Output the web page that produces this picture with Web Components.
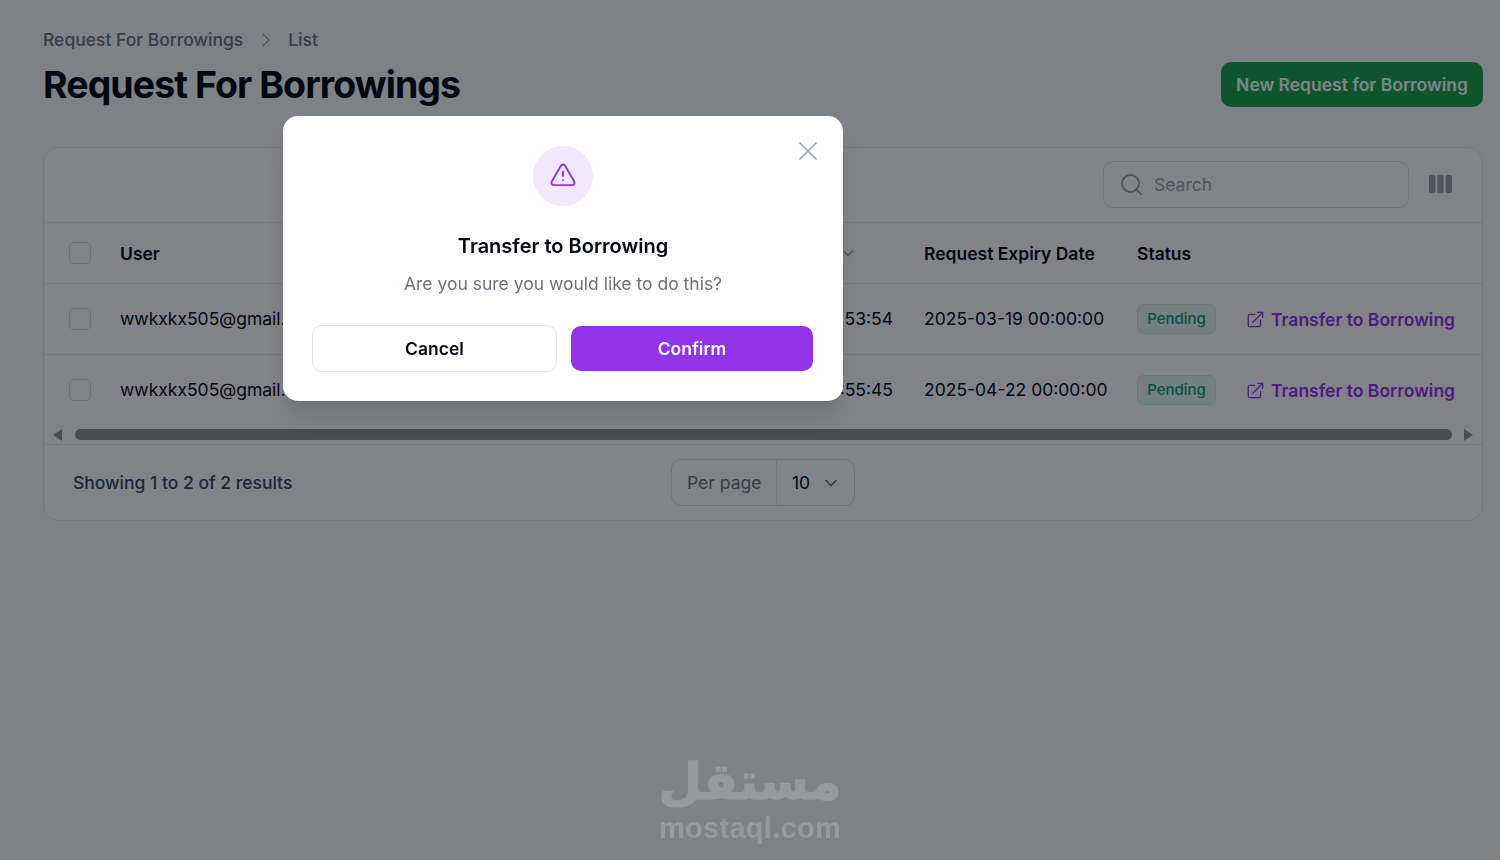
<!DOCTYPE html>
<html lang="en"><head><meta charset="utf-8"><title>Request For Borrowings</title>
<style>
html,body{margin:0;height:100%}
body{background:#f9fafb;font-family:Inter,"Liberation Sans",sans-serif;color:#030712;font-size:17.5px;overflow:hidden}
</style></head><body>
<borrow-page></borrow-page>
<modal-overlay></modal-overlay>
<mostaql-mark></mostaql-mark>
<script>
const def=(name,html,extra)=>{customElements.define(name,class extends HTMLElement{
  constructor(){super();this.attachShadow({mode:'open'}).innerHTML=html;}
  connectedCallback(){extra&&extra(this);}
});};
const ext=`<svg width="20" height="20" viewBox="0 0 20 20" fill="none" stroke="currentColor" stroke-width="1.5" stroke-linecap="round" stroke-linejoin="round"><path d="M9 4H3.200A1.700 1.700 0 0 0 1.500 5.700v11.100a1.700 1.700 0 0 0 1.700 1.700h11.100a1.700 1.700 0 0 0 1.700-1.700V11M6.500 13.500 18.500 1.500M12.500 1.500h6v6"/></svg>`;

def('check-box',`<style>:host{display:block;width:22px;height:22px;box-sizing:border-box;border-radius:5px;background:#fff;border:1.500px solid #d6d8dc}</style>`);
def('status-badge',`<style>:host{display:inline-flex;align-items:center;justify-content:center;width:79px;height:30px;box-sizing:border-box;padding-bottom:1px;border-radius:7px;background:#e4f8f0;border:1px solid #cfe9de;color:#129a72;font-size:15px;font-weight:500}</style><slot></slot>`);
def('row-action',`<style>:host{display:inline-flex;align-items:center;gap:7px;color:#9333ea;font-weight:600;font-size:17.5px;white-space:nowrap;position:relative;top:1px}svg{display:block;width:17px;height:17px}</style>${ext}<slot></slot>`);

def('table-row',`<style>
:host{display:grid;grid-template-columns:51px 470px 334px 213px 110px 1fr;align-items:center;padding-left:25px;height:70px;border-top:1px solid #e5e7eb;white-space:nowrap}
.d{text-align:right;padding-right:31px}
.t{padding-bottom:2px}
</style><check-box></check-box><div class="t"><slot name="user"></slot></div><div class="d t"><slot name="date"></slot></div><div class="t"><slot name="expiry"></slot></div><div style="display:flex"><status-badge>Pending</status-badge></div><div><row-action>Transfer to Borrowing</row-action></div>`);

def('head-row',`<style>
:host{display:grid;grid-template-columns:51px 470px 334px 213px 110px 1fr;align-items:center;padding-left:25px;height:60px;border-top:1px solid #e5e7eb;white-space:nowrap;font-weight:600;background:#fff}
.d{display:flex;justify-content:flex-end;align-items:center;gap:8px;padding-right:69px}
svg{display:block}
</style><check-box></check-box><div>User</div><div class="d"><span>Request Date</span><svg width="14" height="14" viewBox="0 0 14 14" fill="none" stroke="#9ca3af" stroke-width="1.6"><path d="m2 4.500 5 5 5-5"/></svg></div><div>Request Expiry Date</div><div>Status</div><div></div>`);

def('search-box',`<style>
:host{display:flex;align-items:center;gap:10px;width:306px;height:47px;box-sizing:border-box;padding-left:15px;border:1px solid #d9dbdf;border-radius:10px;background:#fff;color:#9ca3af;font-size:17.5px}
svg{display:block}
</style><svg width="25" height="25" viewBox="0 0 25 25" fill="none" stroke="#9ca3af" stroke-width="1.9" stroke-linecap="round"><circle cx="11.500" cy="11.500" r="8.500"/><path d="m17.600 17.600 4.400 4.400"/></svg><span>Search</span>`);

def('per-page',`<style>
:host{display:flex;align-items:center;height:47px;box-sizing:border-box;border:1px solid #d9dbdf;border-radius:10px;background:#fff;width:184px}
.a{width:105px;box-sizing:border-box;padding-left:15px;color:#6b7280;line-height:45px;border-right:1px solid #d9dbdf}
.b{flex:1;display:flex;align-items:center;justify-content:space-between;padding:0 15px 0 15px}
svg{display:block}
</style><div class="a">Per page</div><div class="b"><span>10</span><svg width="16" height="16" viewBox="0 0 16 16" fill="none" stroke="#6b7280" stroke-width="1.7"><path d="m2.500 5 5.500 5.500 5.500-5.500"/></svg></div>`);

def('h-scrollbar',`<style>
:host{display:flex;align-items:center;height:19px;padding:0 9px;background:#fff;box-sizing:border-box}
i{display:block;width:0;height:0;border-top:6.500px solid transparent;border-bottom:6.500px solid transparent}
.l{border-right:9px solid #909195;margin-right:13px}.r{border-left:9px solid #909195;margin-left:12px}
.t{flex:1;height:11px;border-radius:6px;background:#909195}
</style><i class="l"></i><div class="t"></div><i class="r"></i>`);

def('data-card',`<style>
:host{display:block;background:#fff;border:1px solid #e5e7eb;border-radius:15px;overflow:hidden;box-sizing:border-box}
.bar{display:flex;justify-content:flex-end;align-items:center;height:72px;padding:0 30px 2px 0;gap:20px}
.cols{display:block}
.foot{display:grid;grid-template-columns:1fr auto 1fr;align-items:center;height:75px;padding:0 29px;border-top:1px solid #e5e7eb;color:#33466e;font-weight:500}
</style>
<div class="bar"><search-box></search-box><svg class="cols" width="23" height="18" viewBox="0 0 24 18" preserveAspectRatio="none" fill="#9ca3af"><path d="M2 0h4.600v18H2a2 2 0 0 1-2-2V2a2 2 0 0 1 2-2ZM8.700 0h6.600v18H8.700ZM17.400 0H22a2 2 0 0 1 2 2v14a2 2 0 0 1-2 2h-4.600Z"/></svg></div>
<head-row></head-row>
<table-row><span slot="user">wwkxkx505@gmail.com</span><span slot="date">2025-03-18 11:53:54</span><span slot="expiry">2025-03-19 00:00:00</span></table-row>
<table-row><span slot="user">wwkxkx505@gmail.com</span><span slot="date">2025-04-21 10:55:45</span><span slot="expiry">2025-04-22 00:00:00</span></table-row>
<h-scrollbar></h-scrollbar>
<div class="foot"><div>Showing 1 to 2 of 2 results</div><per-page style="font-weight:400;color:#030712"></per-page><div></div></div>`);

def('borrow-page',`<style>
:host{display:block;padding:27px 17px 0 43px}
.crumb{display:flex;align-items:center;gap:13px;color:#6b7280;line-height:26px;font-weight:500}
.crumb svg{display:block;margin-right:-1px}
.head{display:flex;justify-content:space-between;align-items:flex-start;margin-top:9px;margin-bottom:40px}
h1{margin:0;font-size:37.5px;line-height:45px;font-weight:700;letter-spacing:-.94px;color:#030712}
.new{height:45px;width:262px;display:flex;align-items:center;justify-content:center;background:#16a34a;color:#fff;border-radius:10px;font-weight:600;white-space:nowrap}
</style>
<div class="crumb"><span>Request For Borrowings</span><svg width="20" height="20" viewBox="0 0 20 20" fill="none" stroke="#9ca3af" stroke-width="1.6"><path d="m7 4 6 6-6 6"/></svg><span>List</span></div>
<div class="head"><h1>Request For Borrowings</h1><div class="new">New Request for Borrowing</div></div>
<data-card></data-card>`);

def('confirm-modal',`<style>
:host{position:absolute;left:283px;top:116px;width:560px;height:285px;box-sizing:border-box;padding:30px;background:#fff;border-radius:15px;box-shadow:0 20px 25px -5px rgba(0,0,0,.1),0 8px 10px -6px rgba(0,0,0,.1);display:flex;flex-direction:column;align-items:center;color:#030712}
.ic{flex:none;width:60px;height:60px;border-radius:50%;background:#f3e8ff;display:flex;align-items:center;justify-content:center}
.ic svg{display:block}
h2{flex:none;margin:25px 0 0;font-size:20px;line-height:30px;font-weight:600}
p{flex:none;margin:8px 0 0;color:#6b7280;line-height:30px;font-size:17.5px}
.btns{flex:none;display:grid;grid-template-columns:245px 242px;gap:14px;margin-top:26px;align-self:flex-start;margin-left:-1px}
.b{height:47px;box-sizing:border-box;display:flex;align-items:center;justify-content:center;border-radius:10px;font-weight:600}
.c{border:1px solid #e1e2e8;background:#fff}
.o{height:45px;margin-top:1px;background:#9333ea;color:#fff}
.x{position:absolute;right:25px;top:25px;display:block}
</style>
<svg class="x" width="20" height="20" viewBox="0 0 20 20" fill="none" stroke="#9ca3af" stroke-width="1.700"><path d="m1.500 1.500 17 17M18.500 1.500l-17 17"/></svg>
<div class="ic"><svg width="30" height="30" viewBox="0 0 30 30" fill="none" stroke="#9333ea" stroke-width="1.900" stroke-linecap="round" stroke-linejoin="round" style="position:relative;top:-1px"><path d="M15 11.500v4.500M15 20.300h.01M12.900 5.700 3.800 21.500a2.400 2.400 0 0 0 2.100 3.600h18.200a2.400 2.400 0 0 0 2.100-3.600L17.100 5.700a2.400 2.400 0 0 0-4.200 0Z"/></svg></div>
<h2>Transfer to Borrowing</h2>
<p>Are you sure you would like to do this?</p>
<div class="btns"><div class="b c">Cancel</div><div class="b o">Confirm</div></div>`);

def('modal-overlay',`<style>:host{position:fixed;inset:0;background:rgba(3,7,18,.5)}</style><confirm-modal></confirm-modal>`);

def('mostaql-mark',`<style>
:host{position:fixed;left:650px;top:745px;width:200px;height:105px;display:flex;flex-direction:column;align-items:center;color:#97999d;pointer-events:none}
.ar{font:700 50px/50px "DejaVu Sans",sans-serif;direction:rtl;height:50px;margin-top:12px;-webkit-text-stroke:1.500px #97999d}
.la{font:700 29px/32px "Liberation Sans",sans-serif;letter-spacing:.3px;margin-top:5px}
</style><div class="ar">مستقل</div><div class="la">mostaql.com</div>`);
</script></body></html>
